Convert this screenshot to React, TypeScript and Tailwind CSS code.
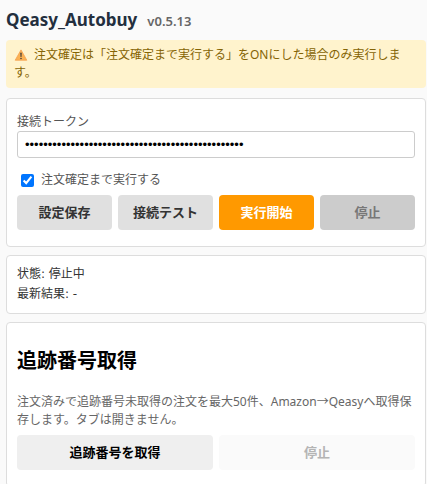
import { useState } from "react";
import type { ButtonHTMLAttributes, ReactNode } from "react";

function Card({ className, children }: { className: string; children: ReactNode }) {
  return (
    <section className={`rounded border border-[#dddddd] bg-white px-[10px] ${className}`}>
      {children}
    </section>
  );
}

function Button({ className, ...rest }: ButtonHTMLAttributes<HTMLButtonElement>) {
  return (
    <button
      type="button"
      className={`h-[35px] flex-1 rounded text-[13px] font-bold ${className}`}
      {...rest}
    />
  );
}

function WarningIcon() {
  return (
    <svg className="mr-[6px] inline-block h-3 w-[14px] align-[-2px]" viewBox="0 0 14 12" aria-hidden="true">
      <path d="M7 .9 12.8 11.2H1.2Z" fill="#fbb253" stroke="#f5a04c" strokeWidth=".8" strokeLinejoin="round" />
      <path d="M6.2 3.8h1.6L7.5 8h-1Z" fill="#4b4038" />
      <circle cx="7" cy="9.5" r=".8" fill="#4b4038" />
    </svg>
  );
}

export default function App() {
  const [token, setToken] = useState("x".repeat(48));
  const [confirm, setConfirm] = useState(true);

  return (
    <main className="min-h-screen bg-[#fafafa] pt-2 pr-px pl-[6px] font-['Noto_Sans','Noto_Sans_CJK_JP',sans-serif] text-xs text-[#333333]">
      <h1 className="flex items-baseline gap-[10px] text-[17px] leading-6 font-bold text-[#232f3e]">
        Qeasy_Autobuy
        <span className="text-[13px] leading-5 font-semibold text-[#666666]">v0.5.13</span>
      </h1>

      <p className="mt-2 rounded bg-[#fff3cd] px-2 py-[6px] leading-[18px] text-[#856404]">
        <WarningIcon />
        注文確定は「注文確定まで実行する」をONにした場合のみ実行します。
      </p>

      <Card className="mt-[10px] pt-[14px] pb-4">
        <label htmlFor="token" className="block leading-[18px] text-[#555555]">
          接続トークン
        </label>
        <input
          id="token"
          type="password"
          value={token}
          onChange={(e) => setToken(e.target.value)}
          className="block h-[27px] w-full rounded-[3px] border border-[#cccccc] bg-white px-[7px] font-['Liberation_Sans',sans-serif] text-[13px] text-black"
        />
        <label className="mt-[13px] flex items-center gap-[7px] pl-1 leading-[18px] text-[#555555]">
          <input
            type="checkbox"
            checked={confirm}
            onChange={(e) => setConfirm(e.target.checked)}
            className="size-[13px]"
          />
          注文確定まで実行する
        </label>
        <div className="mt-[6px] flex gap-[6px]">
          <Button className="bg-[#e0e0e0] text-[#333333]">設定保存</Button>
          <Button className="bg-[#e0e0e0] text-[#333333]">接続テスト</Button>
          <Button className="bg-[#ff9900] text-white">実行開始</Button>
          <Button className="bg-[#cccccc] text-[#777777]" disabled>停止</Button>
        </div>
      </Card>

      <Card className="mt-2 pt-2 pb-[9px] font-['DejaVu_Sans','Noto_Sans_CJK_JP',sans-serif] leading-5">
        <p>状態: 停止中</p>
        <p>最新結果: -</p>
      </Card>

      <Card className="mt-2 pt-[23px] pb-4">
        <h2 className="text-[20px] leading-[30px] font-bold text-black">追跡番号取得</h2>
        <p className="mt-[17px] leading-[18px] text-[#666666]">
          注文済みで追跡番号未取得の注文を最大50件、Amazon→Qeasyへ取得保存します。タブは開きません。
        </p>
        <div className="mt-[6px] flex gap-[6px]">
          <Button className="bg-[#efefef] text-black">追跡番号を取得</Button>
          <Button className="bg-[#fafafa] text-[#b4b4b4]" disabled>停止</Button>
        </div>
      </Card>
    </main>
  );
}
